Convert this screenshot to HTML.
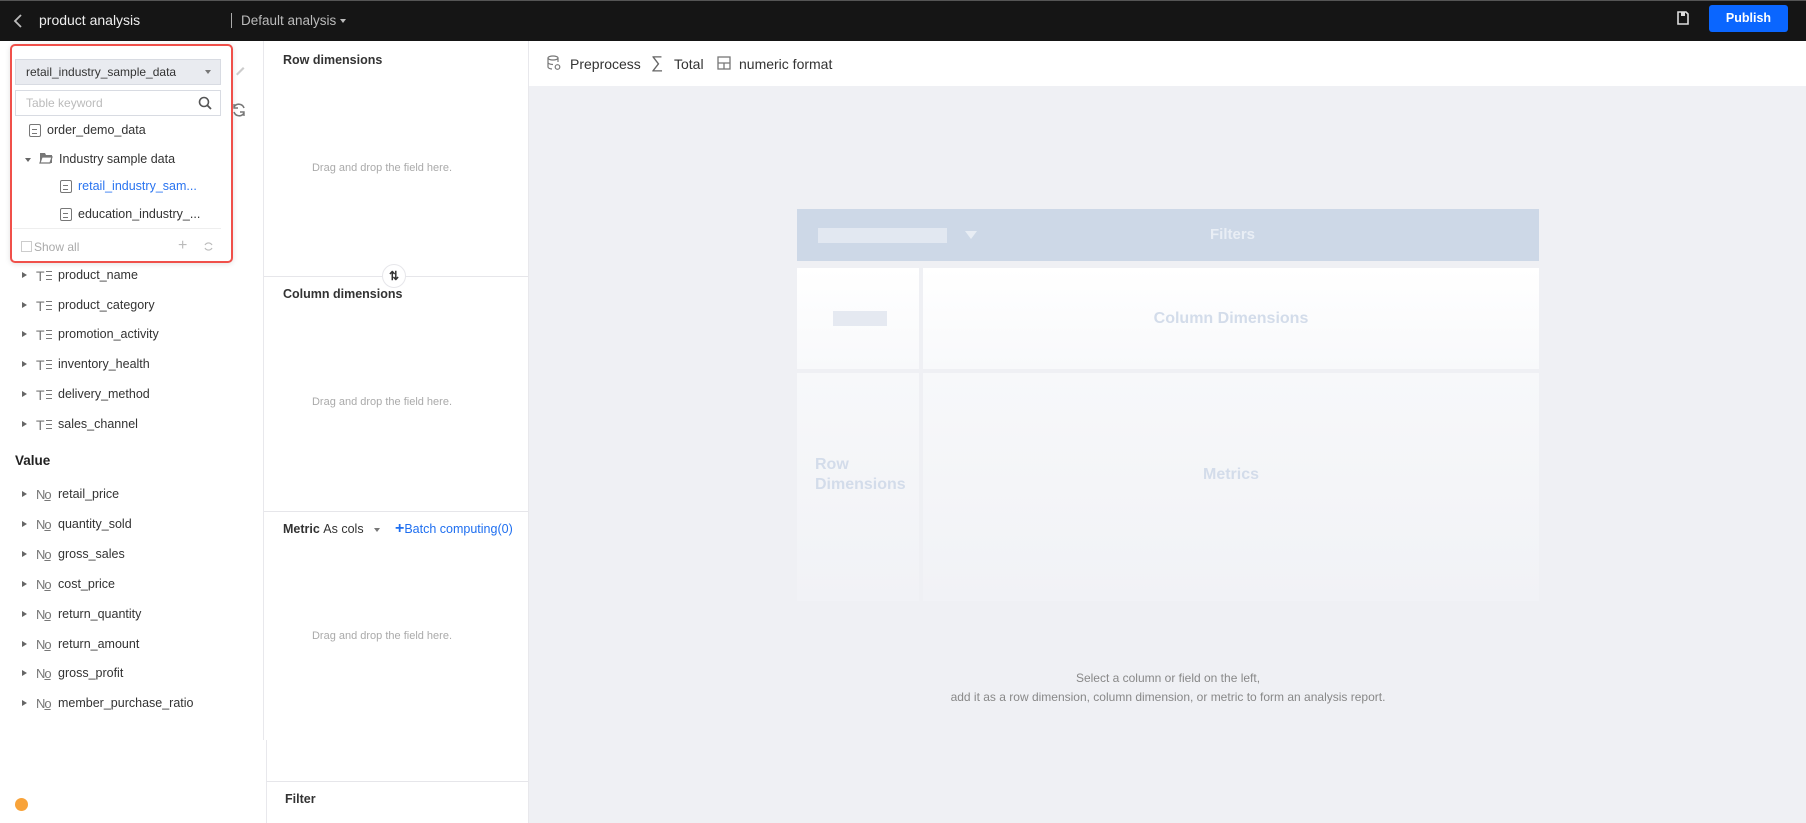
<!DOCTYPE html>
<html><head><meta charset="utf-8"><style>
*{box-sizing:border-box;margin:0;padding:0}
body{width:1806px;height:823px;overflow:hidden;background:#fff;font-family:"Liberation Sans",Arial,sans-serif;color:#333;position:relative}
.a{position:absolute}
.top{left:0;top:0;width:1806px;height:41px;background:#151515;border-top:1px solid #555}
.fld{font-size:12.5px;color:#333;position:absolute;left:58px}
.arr{position:absolute;left:22px;width:0;height:0;border-top:3.5px solid transparent;border-bottom:3.5px solid transparent;border-left:5px solid #666}
.ti{position:absolute;left:36px;font-size:14px;color:#777;width:20px;height:14px}
.ti.t:after{content:"";position:absolute;left:10px;top:3px;width:6px;height:3px;border-top:1.3px solid #777;border-bottom:1.3px solid #777}
.ti.t:before{content:"";position:absolute;left:10px;top:11px;width:6px;border-top:1.3px solid #777}
.ti.n{font-size:13px;letter-spacing:-1px}
.drag{position:absolute;font-size:11px;color:#aaa;width:264px;text-align:center;left:250px}
.h{position:absolute;left:283px;font-size:12.5px;font-weight:bold;color:#333}
.doc{display:inline-block;width:12px;height:13px;border:1.5px solid #777;border-radius:2px;position:absolute}
.doc:after{content:"";position:absolute;left:2px;top:4px;width:5px;height:3px;border-top:1.2px solid #777;border-bottom:1.2px solid #777}
</style></head><body>
<div class="a top"></div>
<svg class="a" style="left:13px;top:13px" width="10" height="16"><path d="M8 2L2 8l6 6" stroke="#bbb" stroke-width="1.8" fill="none"/></svg>
<div class="a" style="left:39px;top:12px;font-size:14px;color:#eee">product analysis</div>
<div class="a" style="left:231px;top:13px;width:1px;height:15px;background:#aaa"></div>
<div class="a" style="left:241px;top:13px;font-size:13.5px;color:#bbb">Default analysis</div>
<div class="a" style="left:340px;top:19px;border-left:3.5px solid transparent;border-right:3.5px solid transparent;border-top:4px solid #bbb"></div>
<svg class="a" style="left:1676px;top:10px" width="14" height="16"><path d="M2 2h8l2 2v10H2z" fill="none" stroke="#ddd" stroke-width="1.6"/><rect x="5" y="2" width="4" height="4" fill="#ddd"/></svg>
<div class="a" style="left:1709px;top:5px;width:79px;height:27px;background:#0a66ff;border-radius:3px;color:#fff;font-size:12.5px;font-weight:bold;text-align:center;line-height:27px">Publish</div>

<div class="a" style="left:263px;top:41px;width:1px;height:699px;background:#e8e8ec"></div>
<div class="a" style="left:10px;top:44px;width:223px;height:219px;border:2.5px solid #f0504a;border-radius:5px;background:#fff;box-shadow:0 1px 6px rgba(0,0,0,.12)"></div>
<div class="a" style="left:15px;top:59px;width:206px;height:26px;background:#e9ebf0;border:1px solid #d8dbe2;font-size:12px;line-height:24px;padding-left:10px;color:#333">retail_industry_sample_data</div>
<div class="a" style="left:205px;top:70px;border-left:3.5px solid transparent;border-right:3.5px solid transparent;border-top:4px solid #777"></div>
<div class="a" style="left:15px;top:90px;width:206px;height:26px;border:1px solid #d8dbe2;font-size:12px;line-height:24px;padding-left:10px;color:#bbb">Table keyword</div>
<svg class="a" style="left:198px;top:96px" width="14" height="14"><circle cx="6" cy="6" r="4.5" stroke="#555" stroke-width="1.6" fill="none"/><path d="M9.5 9.5L13 13" stroke="#555" stroke-width="1.8"/></svg>
<span class="doc" style="left:29px;top:124px"></span>
<div class="a" style="left:47px;top:123px;font-size:12.5px">order_demo_data</div>
<div class="a" style="left:25px;top:158px;border-left:3.5px solid transparent;border-right:3.5px solid transparent;border-top:4px solid #666"></div>
<svg class="a" style="left:39px;top:152px" width="14" height="12"><path d="M1 1h5l1 2h6v8H1z" fill="#777"/><path d="M3 5h10l-2 6H1z" fill="#fff" stroke="#777" stroke-width="1.2"/></svg>
<div class="a" style="left:59px;top:152px;font-size:12.5px">Industry sample data</div>
<span class="doc" style="left:60px;top:180px"></span>
<div class="a" style="left:78px;top:179px;font-size:12.5px;color:#2a74f0">retail_industry_sam...</div>
<span class="doc" style="left:60px;top:208px"></span>
<div class="a" style="left:78px;top:207px;font-size:12.5px">education_industry_...</div>
<div class="a" style="left:13px;top:228px;width:208px;height:1px;background:#eee"></div>
<div class="a" style="left:21px;top:241px;width:11px;height:11px;border:1px solid #ccc"></div>
<div class="a" style="left:34px;top:240px;font-size:12px;color:#aaa">Show all</div>
<div class="a" style="left:178px;top:240px;font-size:16px;color:#bbb;line-height:12px">+</div>
<svg class="a" style="left:203px;top:241px" width="11" height="11"><path d="M9 4A4 4 0 0 0 2 4M2 7a4 4 0 0 0 7 0" stroke="#bbb" fill="none" stroke-width="1.2"/></svg>
<svg class="a" style="left:234px;top:64px" width="12" height="12"><path d="M2 10l7-7 1.5 1.5-7 7z" fill="#ccc"/></svg>
<svg class="a" style="left:231px;top:102px" width="16" height="16"><path d="M13 6A5.5 5.5 0 0 0 3 5M3 10a5.5 5.5 0 0 0 10 1" stroke="#777" fill="none" stroke-width="1.6"/><path d="M3 2v4h4M13 14v-4H9" stroke="#777" fill="none" stroke-width="1.4"/></svg>

<div class="arr" style="top:272px"></div><div class="ti t" style="top:268px">T</div><div class="fld" style="top:268px">product_name</div>
<div class="arr" style="top:302px"></div><div class="ti t" style="top:298px">T</div><div class="fld" style="top:298px">product_category</div>
<div class="arr" style="top:331px"></div><div class="ti t" style="top:327px">T</div><div class="fld" style="top:327px">promotion_activity</div>
<div class="arr" style="top:361px"></div><div class="ti t" style="top:357px">T</div><div class="fld" style="top:357px">inventory_health</div>
<div class="arr" style="top:391px"></div><div class="ti t" style="top:387px">T</div><div class="fld" style="top:387px">delivery_method</div>
<div class="arr" style="top:421px"></div><div class="ti t" style="top:417px">T</div><div class="fld" style="top:417px">sales_channel</div>
<div class="a" style="left:15px;top:453px;font-size:13.5px;font-weight:bold;color:#222">Value</div>
<div class="arr" style="top:491px"></div><div class="ti n" style="top:487px">N<u>o</u></div><div class="fld" style="top:487px">retail_price</div>
<div class="arr" style="top:521px"></div><div class="ti n" style="top:517px">N<u>o</u></div><div class="fld" style="top:517px">quantity_sold</div>
<div class="arr" style="top:551px"></div><div class="ti n" style="top:547px">N<u>o</u></div><div class="fld" style="top:547px">gross_sales</div>
<div class="arr" style="top:581px"></div><div class="ti n" style="top:577px">N<u>o</u></div><div class="fld" style="top:577px">cost_price</div>
<div class="arr" style="top:611px"></div><div class="ti n" style="top:607px">N<u>o</u></div><div class="fld" style="top:607px">return_quantity</div>
<div class="arr" style="top:641px"></div><div class="ti n" style="top:637px">N<u>o</u></div><div class="fld" style="top:637px">return_amount</div>
<div class="arr" style="top:670px"></div><div class="ti n" style="top:666px">N<u>o</u></div><div class="fld" style="top:666px">gross_profit</div>
<div class="arr" style="top:700px"></div><div class="ti n" style="top:696px">N<u>o</u></div><div class="fld" style="top:696px">member_purchase_ratio</div>
<div class="a" style="left:15px;top:798px;width:13px;height:13px;border-radius:50%;background:#f8a33a"></div>

<div class="a" style="left:528px;top:41px;width:1px;height:782px;background:#e8e8ec"></div>
<div class="a" style="left:266px;top:740px;width:1px;height:83px;background:#e8e8ec"></div>
<div class="h" style="top:53px">Row dimensions</div>
<div class="drag" style="top:162px">Drag and drop the field here.</div>
<div class="a" style="left:264px;top:276px;width:264px;height:1px;background:#e6e6ea"></div>
<div class="a" style="left:382px;top:264px;width:24px;height:24px;border-radius:50%;border:1px solid #e6e6ea;background:#fff;font-size:12px;font-weight:bold;text-align:center;line-height:22px;color:#333">⇅</div>
<div class="h" style="top:287px">Column dimensions</div>
<div class="drag" style="top:396px">Drag and drop the field here.</div>
<div class="a" style="left:264px;top:511px;width:264px;height:1px;background:#e6e6ea"></div>
<div class="h" style="top:522px">Metric <span style="font-weight:normal">As cols</span></div>
<div class="a" style="left:374px;top:528px;border-left:3.5px solid transparent;border-right:3.5px solid transparent;border-top:4px solid #777"></div>
<div class="a" style="left:395px;top:522px;font-size:12.5px;color:#1f6ff0"><b style="font-size:16px;line-height:12px">+</b>Batch computing(0)</div>
<div class="drag" style="top:630px">Drag and drop the field here.</div>
<div class="a" style="left:266px;top:781px;width:262px;height:1px;background:#e6e6ea"></div>
<div class="h" style="top:792px;left:285px">Filter</div>

<div class="a" style="left:529px;top:41px;width:1277px;height:45px;background:#fff"></div>
<div class="a" style="left:529px;top:86px;width:1277px;height:737px;background:#eff0f4"></div>
<svg class="a" style="left:547px;top:55px" width="14" height="16"><ellipse cx="6" cy="3" rx="5" ry="2" fill="none" stroke="#777" stroke-width="1.2"/><path d="M1 3v9c0 1 2 2 4 2M11 3v4M1 7.5c0 1 2 2 5 2" fill="none" stroke="#777" stroke-width="1.2"/><circle cx="10.5" cy="12" r="2.3" fill="none" stroke="#777" stroke-width="1.2"/></svg>
<div class="a" style="left:570px;top:56px;font-size:14px;color:#333">Preprocess</div>
<div class="a" style="left:651px;top:53px;font-size:17px;color:#666">∑</div>
<div class="a" style="left:674px;top:56px;font-size:14px;color:#333">Total</div>
<svg class="a" style="left:717px;top:56px" width="14" height="14"><rect x="1" y="1" width="12" height="12" fill="none" stroke="#777" stroke-width="1.3"/><path d="M1 7h12M7 7v6" stroke="#777" stroke-width="1.3"/></svg>
<div class="a" style="left:739px;top:56px;font-size:14px;color:#333">numeric format</div>

<div class="a" style="left:797px;top:209px;width:742px;height:52px;background:#cdd8e7"></div>
<div class="a" style="left:818px;top:228px;width:129px;height:15px;background:#e2e8f1"></div>
<div class="a" style="left:965px;top:231px;border-left:6px solid transparent;border-right:6px solid transparent;border-top:8px solid #e8edf4"></div>
<div class="a" style="left:1210px;top:226px;font-size:15px;font-weight:bold;color:#e9eef5">Filters</div>
<div class="a" style="left:797px;top:268px;width:122px;height:101px;background:linear-gradient(#fff,#f8f9fb)"></div>
<div class="a" style="left:833px;top:311px;width:54px;height:15px;background:#e5e9f1"></div>
<div class="a" style="left:923px;top:268px;width:616px;height:101px;background:linear-gradient(#fff,#f8f9fb)"></div>
<div class="a" style="left:923px;top:310px;width:616px;text-align:center;font-size:16px;font-weight:bold;color:#d3dcea">Column Dimensions</div>
<div class="a" style="left:797px;top:373px;width:122px;height:228px;background:linear-gradient(#f7f8fa,#f1f2f6)"></div>
<div class="a" style="left:923px;top:373px;width:616px;height:228px;background:linear-gradient(#f7f8fa,#f1f2f6)"></div>
<div class="a" style="left:815px;top:455px;font-size:16px;font-weight:bold;color:#d3dcea;line-height:20px">Row<br>Dimensions</div>
<div class="a" style="left:923px;top:466px;width:616px;text-align:center;font-size:16px;font-weight:bold;color:#d3dcea">Metrics</div>
<div class="a" style="left:797px;top:669px;width:742px;text-align:center;font-size:12px;color:#888;line-height:19px">Select a column or field on the left,<br>add it as a row dimension, column dimension, or metric to form an analysis report.</div>
</body></html>
